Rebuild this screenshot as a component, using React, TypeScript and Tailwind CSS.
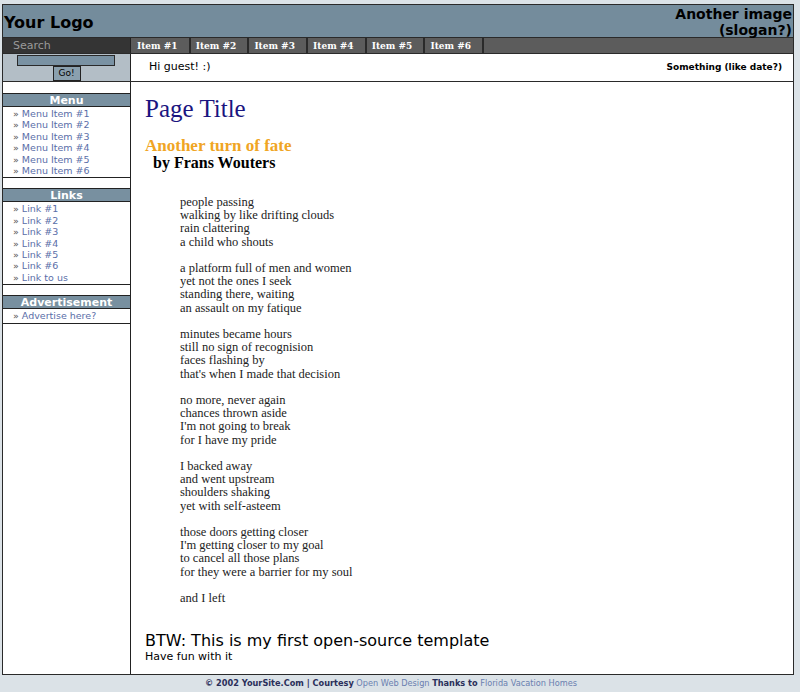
import React from 'react';

// ─────────────────────────────────────────────
//  Old-school open-source template layout
// ─────────────────────────────────────────────

const sans = { fontFamily: '"DejaVu Sans", Verdana, sans-serif' };
const serif = { fontFamily: '"Liberation Serif", Georgia, serif' };

const navItems = ['Item #1', 'Item #2', 'Item #3', 'Item #4', 'Item #5', 'Item #6'];

const boxes = [
  {
    title: 'Menu',
    items: ['Menu Item #1', 'Menu Item #2', 'Menu Item #3', 'Menu Item #4', 'Menu Item #5', 'Menu Item #6'],
  },
  {
    title: 'Links',
    items: ['Link #1', 'Link #2', 'Link #3', 'Link #4', 'Link #5', 'Link #6', 'Link to us'],
  },
  { title: 'Advertisement', items: ['Advertise here?'] },
];

const poem = [
  ['people passing', 'walking by like drifting clouds', 'rain clattering', 'a child who shouts'],
  ['a platform full of men and women', 'yet not the ones I seek', 'standing there, waiting', 'an assault on my fatique'],
  ['minutes became hours', 'still no sign of recognision', 'faces flashing by', "that's when I made that decision"],
  ['no more, never again', 'chances thrown aside', "I'm not going to break", 'for I have my pride'],
  ['I backed away', 'and went upstream', 'shoulders shaking', 'yet with self-asteem'],
  ['those doors getting closer', "I'm getting closer to my goal", 'to cancel all those plans', 'for they were a barrier for my soul'],
  ['and I left'],
];

const SideBox: React.FC<{ title: string; items: string[] }> = ({ title, items }) => (
  <div className="mt-[10px] first:mt-[11px] border-y border-[#222]">
    <div className="h-[13px] bg-[#7890a0] border-b border-[#222] text-center text-white font-bold text-[11px] leading-[13px]">
      {title}
    </div>
    <ul className="py-[1px] pl-[10px]">
      {items.map((it) => (
        <li key={it} className="text-[9.5px] leading-[11.4px] text-[#5a6ea8]">
          <span className="text-[#555]">»</span> {it}
        </li>
      ))}
    </ul>
  </div>
);

export default function App() {
  return (
    <div className="min-h-[692px] bg-[#dbe2e7] pt-[4px] pl-[2px]" style={sans}>
      <div className="w-[792px] border border-[#2a2a2a] bg-white">
        {/* header */}
        <div className="h-[33px] bg-[#748c9c] flex justify-between items-start border-b border-[#2a2a2a]">
          <div className="pt-[8px] pl-[1px] text-[16px] font-bold text-black leading-[20px]">Your Logo</div>
          <div className="text-right text-[14px] font-bold leading-[16px] pt-[1px] pr-[1px] text-black">
            Another image
            <br />
            (slogan?)
          </div>
        </div>

        {/* nav */}
        <div className="h-[16px] flex border-b border-[#2a2a2a]">
          <div className="w-[128px] bg-[#343434] text-[#9a9a9a] text-[11px] leading-[16px] pl-[10px] border-r border-[#222]">
            Search
          </div>
          <div className="flex-1 bg-[#5c5c5c] flex pl-[1px]">
            {navItems.map((n) => (
              <div
                key={n}
                className="w-[58.7px] pl-[5px] border-r-2 border-[#2a2a2a] text-white font-bold text-[9px] leading-[16px]"
                style={{ fontFamily: '"DejaVu Serif", Georgia, serif' }}
              >
                {n}
              </div>
            ))}
          </div>
        </div>

        {/* search + greeting */}
        <div className="h-[28px] flex border-b border-[#2a2a2a]">
          <div className="w-[128px] bg-[#b3bec6] border-r border-[#222] flex flex-col items-center pt-[1px]">
            <div className="mr-[2px] w-[98px] h-[11px] bg-[#7a92a3] border border-[#2a2a2a]" />
            <div className="w-[28px] h-[15px] bg-[#8aa0ae] border border-[#222] text-[9px] leading-[13px] text-center text-black">
              Go!
            </div>
          </div>
          <div className="flex-1 flex items-center justify-between pl-[18px] pr-[11px]">
            <span className="text-[11px] text-black">Hi guest! :)</span>
            <span className="text-[9px] font-bold text-black">Something (like date?)</span>
          </div>
        </div>

        {/* main */}
        <div className="flex">
          <div className="w-[128px] border-r border-[#222]">
            {boxes.map((b) => (
              <SideBox key={b.title} title={b.title} items={b.items} />
            ))}
          </div>
          <div className="flex-1 pl-[14px] pt-[12px] pb-[11px]">
            <h1 className="text-[25px] leading-[30px] text-[#1a1580]" style={serif}>
              Page Title
            </h1>
            <h2 className="mt-[13px] text-[17px] leading-[17px] font-bold text-[#f0a524]" style={serif}>
              Another turn of fate
            </h2>
            <h3 className="pl-[8px] text-[16px] leading-[17px] font-bold text-black" style={serif}>
              by Frans Wouters
            </h3>
            <div className="mt-[25px] pl-[35px] text-[12.5px] leading-[13.2px] text-[#222]" style={serif}>
              {poem.map((stanza, i) => (
                <div key={i} className={i > 0 ? 'mt-[13.2px]' : ''}>
                  {stanza.map((l) => (
                    <div key={l}>{l}</div>
                  ))}
                </div>
              ))}
            </div>
            <p className="mt-[27px] text-[16px] leading-[18px] text-black">BTW: This is my first open-source template</p>
            <p className="text-[11px] leading-[13px] text-black">Have fun with it</p>
          </div>
        </div>
      </div>

      {/* footer */}
      <div className="w-[792px] text-center text-[8.2px] leading-[16px] pr-[14px]">
        <span className="font-bold text-[#2a2f5a]">© 2002 YourSite.Com | Courtesy</span>{' '}
        <span className="text-[#6a80b0]">Open Web Design</span>{' '}
        <span className="font-bold text-[#2a2f5a]">Thanks to</span>{' '}
        <span className="text-[#6a80b0]">Florida Vacation Homes</span>
      </div>
    </div>
  );
}
